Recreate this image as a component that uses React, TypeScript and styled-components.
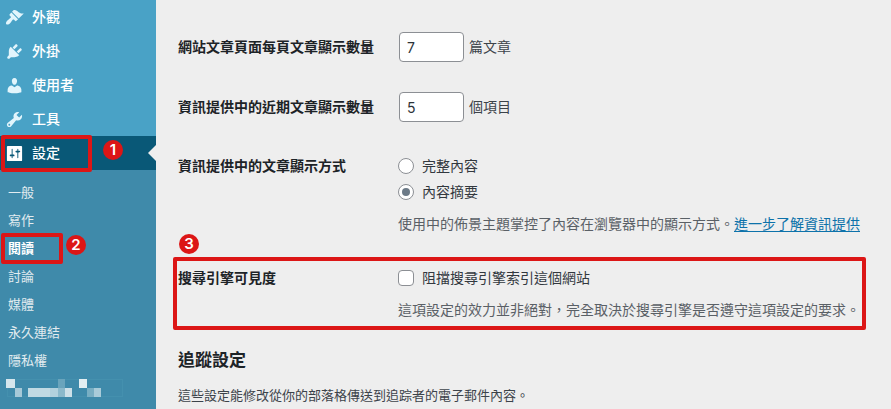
import React, { useState } from 'react';
import styled, { createGlobalStyle, css } from 'styled-components';

const RED = '#dc1616';

const GlobalStyle = createGlobalStyle`
  *, *::before, *::after { box-sizing: border-box; }
  body {
    margin: 0;
    background: #eeeeee;
    color: #3c434a;
    font-family: Inter, "Noto Sans CJK TC", sans-serif;
    font-size: 14px;
    line-height: 20px;
  }
`;

const Page = styled.div`
  display: flex;
  min-height: 100vh;
`;

const Sidebar = styled.nav`
  flex: 0 0 156px;
  background: #49a2c6;
`;

const MenuList = styled.ul`
  list-style: none;
  margin: 0;
  padding: 0;
`;

const MenuItem = styled.li`
  position: relative;
`;

const MenuLink = styled.a<{ $active?: boolean }>`
  display: flex;
  align-items: center;
  gap: 8px;
  height: 34px;
  padding-left: 5px;
  color: #ffffff;
  font-weight: 500;
  text-decoration: none;

  svg {
    width: 19px;
    height: 19px;
    fill: #e2f5fc;
  }

  ${({ $active }) =>
    $active &&
    css`
      background: #095877;
      svg {
        fill: #ffffff;
      }
    `}
`;

const Notch = styled.span`
  position: absolute;
  top: 9px;
  right: 0;
  border: 8px solid transparent;
  border-left-width: 0;
  border-right-color: #eeeeee;
`;

const SubMenu = styled.ul`
  list-style: none;
  margin: 0;
  padding: 8px 0 12px;
  background: #3f8aaa;
`;

const SubLink = styled.a<{ $current?: boolean }>`
  display: block;
  padding: 4px 8px;
  font-size: 13px;
  text-decoration: none;
  color: ${({ $current }) => ($current ? '#ffffff' : '#e2ecf0')};
  font-weight: ${({ $current }) => ($current ? 700 : 400)};
`;

const Masked = styled.svg`
  display: block;
  width: 120px;
  height: 20px;
  margin: 4px 0 0 5px;
`;

const Marker = styled.span`
  position: absolute;
  border: 4px solid ${RED};
  border-radius: 2px;
  pointer-events: none;
`;

const MenuMarker = styled(Marker)`
  inset: -1px 64px -2px 1px;
`;

const SubMarker = styled(Marker)`
  inset: -1px 93px -2px 1px;
`;

const RowMarker = styled(Marker)`
  inset: -11px 25px -10px -5px;
`;

const Badge = styled.span`
  position: absolute;
  width: 20px;
  height: 20px;
  border-radius: 50%;
  background: ${RED};
  color: #ffffff;
  font-size: 15px;
  font-weight: 600;
  text-align: center;
`;

const MenuBadge = styled(Badge)`
  top: 4px;
  left: 103px;
`;

const SubBadge = styled(Badge)`
  top: 1px;
  left: 66px;
`;

const RowBadge = styled(Badge)`
  top: -34px;
  left: 1px;
`;

const Main = styled.main`
  flex: 1;
  min-width: 0;
  padding: 32px 0 0 22px;
`;

const Form = styled.form`
  display: flex;
  flex-direction: column;
  gap: 30px;
`;

const Row = styled.div`
  position: relative;
  display: grid;
  grid-template-columns: 220px 1fr;
`;

const ChoiceRow = styled(Row)`
  margin-top: 4px;
`;

const Heading = styled.div<{ $tall?: boolean }>`
  line-height: ${({ $tall }) => ($tall ? 30 : 20)}px;
  font-weight: 700;
  color: #1d2327;
`;

const Fields = styled.div`
  display: flex;
  flex-direction: column;
  align-items: flex-start;
`;

const NumberField = styled.div`
  display: flex;
  align-items: center;
  gap: 5px;
  padding-left: 1px;
`;

const NumberInput = styled.input`
  width: 65px;
  height: 30px;
  padding: 0 7px;
  border: 1px solid #8c8f94;
  border-radius: 4px;
  background: #ffffff;
  color: #2c3338;
  font: inherit;
`;

const Choice = styled.label`
  display: flex;
  align-items: center;
  gap: 8px;
  color: #32383e;

  & + & {
    margin-top: 6px;
  }
`;

const ChoiceInput = styled.input`
  appearance: none;
  flex: none;
  display: grid;
  place-items: center;
  width: 16px;
  height: 16px;
  margin: 0;
  border: 1px solid #8c8f94;
  border-radius: ${({ type }) => (type === 'radio' ? '50%' : '4px')};
  background: #ffffff;

  &:checked::before {
    content: '';
    width: 8px;
    height: 8px;
    border-radius: ${({ type }) => (type === 'radio' ? '50%' : '1px')};
    background: #6c7a87;
  }
`;

const Description = styled.p`
  margin: 12px 0 0;
  color: #5a6066;
`;

const Link = styled.a`
  color: #0d72aa;
  text-underline-offset: 2px;
`;

const SectionTitle = styled.h2`
  margin: 28px 0 0;
  font-size: 17px;
  line-height: 24px;
  color: #1d2327;
`;

const SectionText = styled.p`
  margin: 13px 0 0;
  font-size: 13px;
`;

const ICONS = {
  appearance:
    'M14.48 11.06L7.41 3.99l1.5-1.5c.5-.56 2.3-.47 3.51.32 1.21.8 1.43 1.28 2.91 2.1 1.18.64 2.45 1.26 4.45.85zm-.71.71L6.7 4.7 4.93 6.47c-.39.39-.39 1.02 0 1.41l1.06 1.06c.39.39.39 1.03 0 1.42-.6.6-1.43 1.11-2.21 1.69-.35.26-.7.53-1.01.84C1.43 14.23.4 16.08 1.4 17.07c.99 1 2.84-.03 4.18-1.36.31-.31.58-.66.85-1.02.57-.78 1.08-1.61 1.69-2.21.39-.39 1.02-.39 1.41 0l1.06 1.06c.39.39 1.02.39 1.41 0z',
  plugins:
    'M13.11 4.36L9.87 7.6 8 5.73l3.24-3.24c.35-.34 1.05-.2 1.56.32.52.51.66 1.21.31 1.55zm-8 1.77l.91-1.12 9.01 9.01-1.19.84c-.71.71-2.63 1.16-3.82 1.16H6.14L4.9 17.26c-.59.59-1.54.59-2.12 0-.59-.58-.59-1.53 0-2.12l1.24-1.24v-3.88c0-1.13.4-3.19 1.09-3.89zm7.26 3.97l3.24-3.24c.34-.35 1.04-.21 1.55.31.52.51.66 1.21.31 1.55l-3.24 3.25z',
  users:
    'M10 9.25c-2.27 0-2.73-3.44-2.73-3.44C7 4.02 7.82 2 9.97 2c2.16 0 2.98 2.02 2.71 3.81 0 0-.41 3.44-2.68 3.44zm0 2.57L12.72 10c2.39 0 4.52 2.33 4.52 4.53v2.49s-3.65 1.13-7.24 1.13c-3.65 0-7.24-1.13-7.24-1.13v-2.49c0-2.25 1.94-4.48 4.47-4.48z',
  tools:
    'M16.68 9.77c-1.34 1.34-3.3 1.67-4.95.99l-5.41 6.52c-.99.99-2.59.99-3.58 0s-.99-2.59 0-3.57l6.52-5.42c-.68-1.65-.35-3.61.99-4.95 1.28-1.28 3.12-1.62 4.72-1.06l-2.89 2.89 2.82 2.82 2.86-2.87c.53 1.58.18 3.39-1.08 4.65zM3.81 16.21c.4.39 1.04.39 1.43 0 .4-.4.4-1.04 0-1.43-.39-.4-1.03-.4-1.43 0-.39.39-.39 1.03 0 1.43z',
  settings:
    'M18 17V3c0-.6-.4-1-1-1H3c-.6 0-1 .4-1 1v14c0 .6.4 1 1 1h14c.6 0 1-.4 1-1zM8 11h1c.55 0 1 .45 1 1s-.45 1-1 1H8v1.5c0 .28-.22.5-.5.5s-.5-.22-.5-.5V13H6c-.55 0-1-.45-1-1s.45-1 1-1h1V5.5c0-.28.22-.5.5-.5s.5.22.5.5V11zm5-2h-1c-.55 0-1-.45-1-1s.45-1 1-1h1V5.5c0-.28.22-.5.5-.5s.5.22.5.5V7h1c.55 0 1 .45 1 1s-.45 1-1 1h-1v5.5c0 .28-.22.5-.5.5s-.5-.22-.5-.5V9z',
};

const MENU: { label: string; icon: keyof typeof ICONS }[] = [
  { label: '外觀', icon: 'appearance' },
  { label: '外掛', icon: 'plugins' },
  { label: '使用者', icon: 'users' },
  { label: '工具', icon: 'tools' },
];

const SUBMENU = ['一般', '寫作', '閱讀', '討論', '媒體', '永久連結', '隱私權'];

function Icon({ name }: { name: keyof typeof ICONS }) {
  return (
    <svg viewBox="0 0 20 20" aria-hidden="true">
      <path d={ICONS[name]} />
    </svg>
  );
}

function MaskedEntry() {
  return (
    <Masked viewBox="0 0 120 20" aria-hidden="true">
      <rect x="2.5" y="1.5" width="115" height="17" fill="none" stroke="#4490ae" />
      <rect x="1" y="1" width="9" height="9" fill="#d5e6ed" />
      <rect x="10" y="10" width="7" height="9" fill="#a6c9d8" />
      <rect x="23" y="10" width="22" height="9" fill="#c1dae3" />
      <rect x="45" y="10" width="8" height="9" fill="#b2d1dd" />
      <rect x="53" y="10" width="7" height="9" fill="#8bb9cb" />
      <rect x="60" y="10" width="7" height="9" fill="#cde0e8" />
      <rect x="53" y="1" width="7" height="9" fill="#69a4bc" />
      <rect x="74" y="1" width="8" height="9" fill="#e3eef2" />
      <rect x="82" y="10" width="7" height="9" fill="#78aec3" />
      <rect x="89" y="10" width="7" height="9" fill="#a9cbd9" />
    </Masked>
  );
}

export default function App() {
  const [posts, setPosts] = useState('7');
  const [items, setItems] = useState('5');
  const [mode, setMode] = useState('excerpt');
  const [blocked, setBlocked] = useState(false);

  return (
    <>
      <GlobalStyle />
      <Page>
        <Sidebar>
          <MenuList>
            {MENU.map(({ label, icon }) => (
              <MenuItem key={label}>
                <MenuLink href="#">
                  <Icon name={icon} />
                  {label}
                </MenuLink>
              </MenuItem>
            ))}
            <MenuItem>
              <MenuLink href="#" $active>
                <Icon name="settings" />
                設定
              </MenuLink>
              <Notch />
              <MenuMarker />
              <MenuBadge>1</MenuBadge>
            </MenuItem>
          </MenuList>
          <SubMenu>
            {SUBMENU.map((label) => (
              <MenuItem key={label}>
                <SubLink href="#" $current={label === '閱讀'}>
                  {label}
                </SubLink>
                {label === '閱讀' && (
                  <>
                    <SubMarker />
                    <SubBadge>2</SubBadge>
                  </>
                )}
              </MenuItem>
            ))}
            <li>
              <MaskedEntry />
            </li>
          </SubMenu>
        </Sidebar>

        <Main>
          <Form>
            <Row>
              <Heading as="label" htmlFor="posts" $tall>
                網站文章頁面每頁文章顯示數量
              </Heading>
              <NumberField>
                <NumberInput id="posts" inputMode="numeric" value={posts} onChange={(e) => setPosts(e.target.value)} />
                篇文章
              </NumberField>
            </Row>
            <Row>
              <Heading as="label" htmlFor="items" $tall>
                資訊提供中的近期文章顯示數量
              </Heading>
              <NumberField>
                <NumberInput id="items" inputMode="numeric" value={items} onChange={(e) => setItems(e.target.value)} />
                個項目
              </NumberField>
            </Row>
            <ChoiceRow role="radiogroup" aria-labelledby="mode-label">
              <Heading id="mode-label">資訊提供中的文章顯示方式</Heading>
              <Fields>
                <Choice>
                  <ChoiceInput type="radio" name="mode" checked={mode === 'full'} onChange={() => setMode('full')} />
                  完整內容
                </Choice>
                <Choice>
                  <ChoiceInput type="radio" name="mode" checked={mode === 'excerpt'} onChange={() => setMode('excerpt')} />
                  內容摘要
                </Choice>
                <Description>
                  使用中的佈景主題掌控了內容在瀏覽器中的顯示方式。<Link href="#">進一步了解資訊提供</Link>
                </Description>
              </Fields>
            </ChoiceRow>
            <ChoiceRow role="group" aria-labelledby="visibility-label">
              <Heading id="visibility-label">搜尋引擎可見度</Heading>
              <Fields>
                <Choice>
                  <ChoiceInput type="checkbox" checked={blocked} onChange={(e) => setBlocked(e.target.checked)} />
                  阻擋搜尋引擎索引這個網站
                </Choice>
                <Description>這項設定的效力並非絕對，完全取決於搜尋引擎是否遵守這項設定的要求。</Description>
              </Fields>
              <RowMarker />
              <RowBadge>3</RowBadge>
            </ChoiceRow>
          </Form>
          <SectionTitle>追蹤設定</SectionTitle>
          <SectionText>這些設定能修改從你的部落格傳送到追踪者的電子郵件內容。</SectionText>
        </Main>
      </Page>
    </>
  );
}
